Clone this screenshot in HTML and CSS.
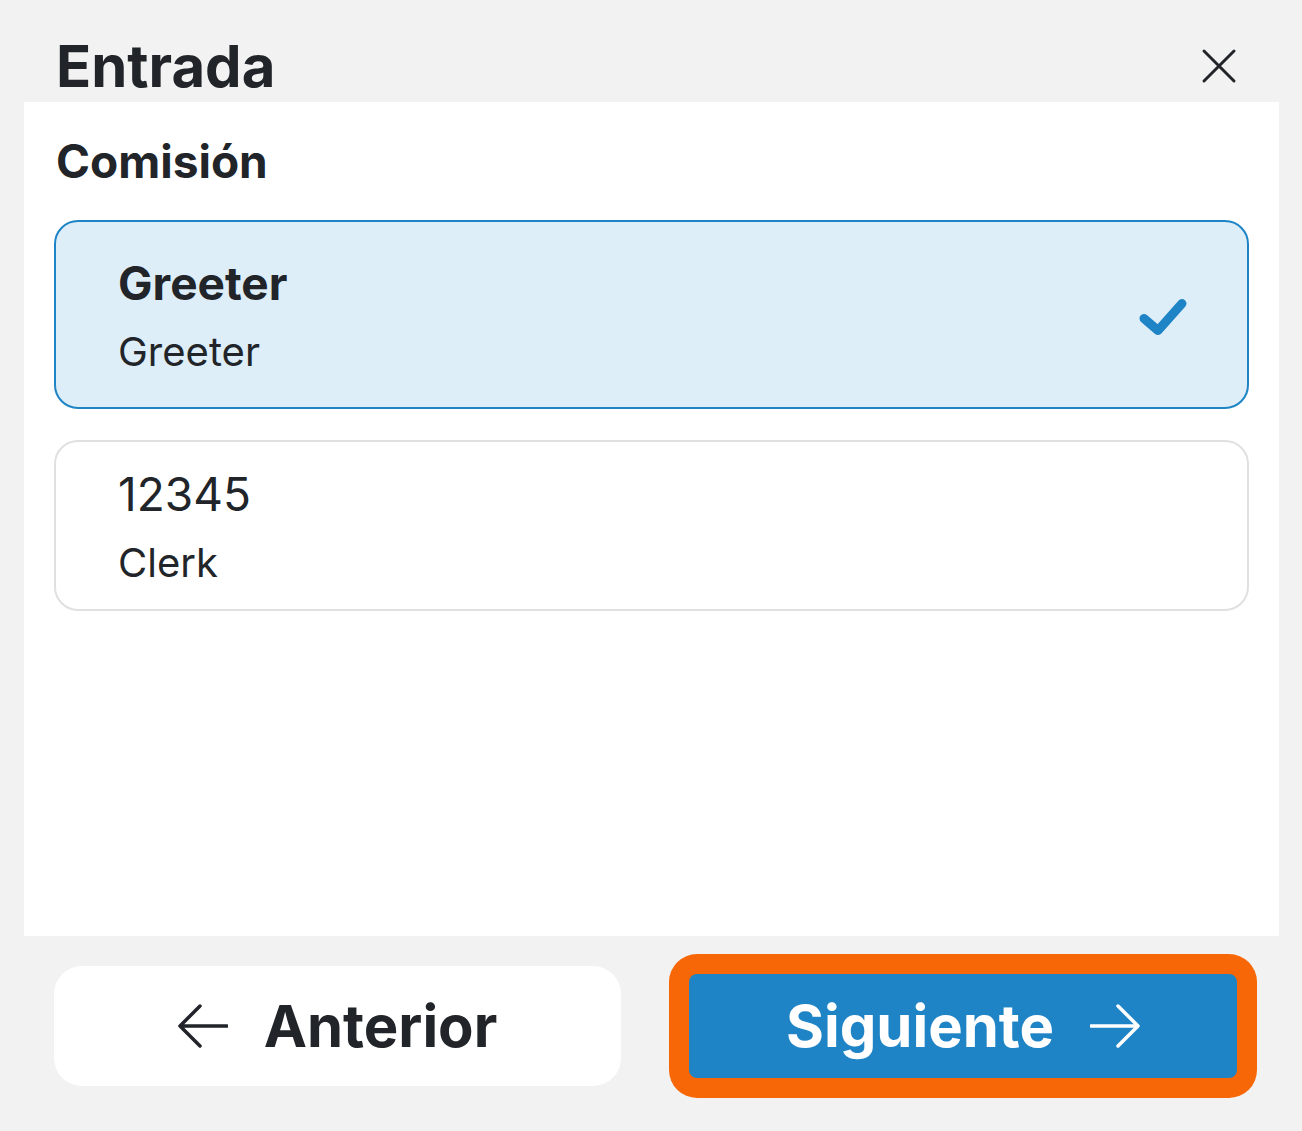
FILE: index.html
```html
<!DOCTYPE html>
<html lang="es">
<head>
<meta charset="utf-8">
<title>Entrada</title>
<link rel="stylesheet" href="styles.css">
</head>
<body>
<header class="header">
  <h1 class="title">Entrada</h1>
  <button class="close" aria-label="Cerrar">
    <svg width="36" height="36" viewBox="0 0 36 36"><path d="M3 3 L33 33 M33 3 L3 33" stroke="#212529" stroke-width="3" stroke-linecap="round" fill="none"/></svg>
  </button>
</header>
<main class="panel">
  <h2 class="section">Comisión</h2>
  <div class="list">
    <div class="card card--selected">
      <div class="card-text">
        <div class="card-title card-title--bold">Greeter</div>
        <div class="card-sub">Greeter</div>
      </div>
      <svg class="check" width="50" height="40" viewBox="0 0 50 40"><polyline points="7,22.5 21,34.5 45,7.5" stroke="#1e84c6" stroke-width="9" stroke-linecap="round" stroke-linejoin="round" fill="none"/></svg>
    </div>
    <div class="card">
      <div class="card-text">
        <div class="card-title">12345</div>
        <div class="card-sub">Clerk</div>
      </div>
    </div>
  </div>
</main>
<footer class="footer">
  <button class="btn btn--secondary">
    <svg width="50" height="44" viewBox="0 0 50 44"><path d="M49 22 H2 M22 2 L2 22 L22 42" stroke="#212529" stroke-width="3.5" stroke-linecap="round" stroke-linejoin="round" fill="none"/></svg>
    <span>Anterior</span>
  </button>
  <button class="btn btn--primary">
    <span>Siguiente</span>
    <svg width="50" height="44" viewBox="0 0 50 44"><path d="M1 22 H48 M28 2 L48 22 L28 42" stroke="#ffffff" stroke-width="3.5" stroke-linecap="round" stroke-linejoin="round" fill="none"/></svg>
  </button>
</footer>
</body>
</html>
```
FILE: styles.css
```css
* { box-sizing: border-box; }
html, body {
  margin: 0;
  padding: 0;
  background: #f2f2f2;
  font-family: Inter, "Noto Sans", sans-serif;
  color: #212529;
}
.header {
  height: 102px;
  display: flex;
  justify-content: space-between;
  align-items: flex-start;
  padding: 31px 65px 0 56px;
}
.title {
  margin: 0;
  font-size: 58px;
  line-height: 70px;
  font-weight: 700;
}
.close {
  margin-top: 17px;
  padding: 0;
  border: 0;
  background: transparent;
  width: 36px;
  height: 36px;
  display: flex;
}
.panel {
  margin: 0 23px 0 24px;
  height: 834px;
  background: #ffffff;
  padding: 31px 30px;
}
.section {
  margin: 0 0 0 2px;
  font-size: 46px;
  line-height: 56px;
  font-weight: 700;
}
.list {
  margin-top: 31px;
  display: flex;
  flex-direction: column;
  gap: 31px;
}
.card {
  display: flex;
  align-items: center;
  border: 2px solid #e0e0e0;
  border-radius: 24px;
  background: #ffffff;
  padding: 25px 60px 22px 62px;
}
.card--selected {
  border-color: #1e84c6;
  background: #ddeef9;
  padding: 34px 60px 31px 62px;
}
.card-text {
  display: flex;
  flex-direction: column;
  gap: 17px;
}
.card-title {
  font-size: 46px;
  line-height: 55px;
  font-weight: 400;
}
.card-title--bold {
  font-weight: 700;
}
.card-sub {
  font-size: 40px;
  line-height: 48px;
  font-weight: 400;
}
.check {
  margin-left: auto;
  flex: none;
}
.footer {
  display: flex;
  gap: 60px;
  padding: 30px 0 45px 54px;
}
.btn {
  height: 120px;
  display: flex;
  align-items: center;
  justify-content: center;
  gap: 36px;
  border: 0;
  border-radius: 28px;
  font-family: Inter, "Noto Sans", sans-serif;
  font-size: 58px;
  font-weight: 700;
  line-height: 1;
  padding: 0;
}
.btn--secondary {
  width: 567px;
  background: #ffffff;
  color: #212529;
}
.btn--primary {
  width: 564px;
  background: #1e84c6;
  color: #ffffff;
  border: 8px solid #f76707;
  border-radius: 16px;
  box-shadow: 0 0 0 12px #f76707;
}
```
